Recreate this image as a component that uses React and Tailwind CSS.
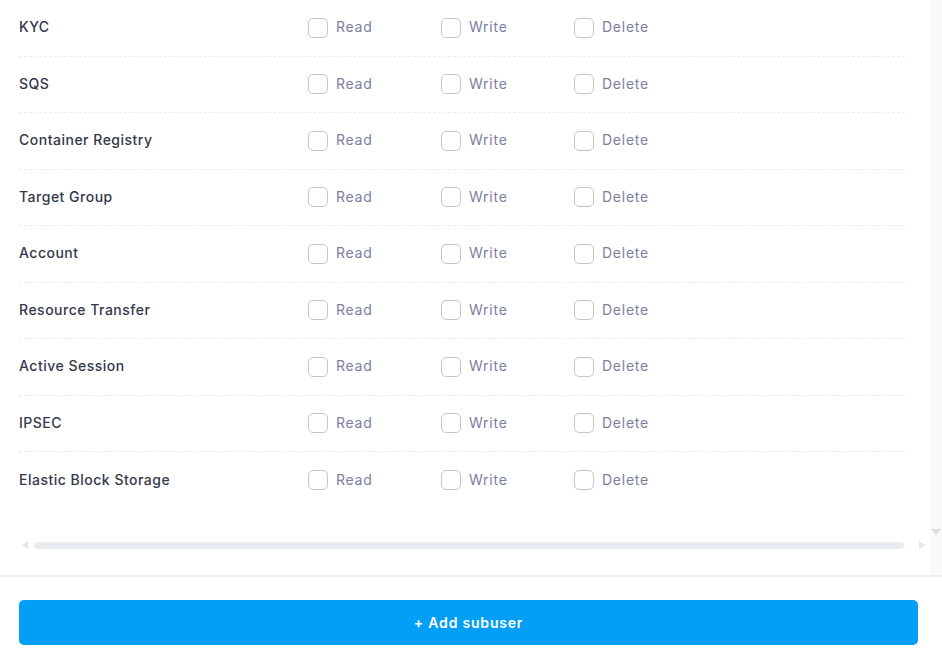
import React from "react";

const rows = [
  "KYC",
  "SQS",
  "Container Registry",
  "Target Group",
  "Account",
  "Resource Transfer",
  "Active Session",
  "IPSEC",
  "Elastic Block Storage",
];

function Perm({ label }) {
  return (
    <div className="w-[133px] flex items-center gap-[8px]">
      <span className="w-[20px] h-[20px] rounded-[5px] border border-[#c6c6c6] bg-white shrink-0" />
      <span className="text-[14px] text-[#7b80a0] tracking-[0.75px] -translate-y-[1px]">{label}</span>
    </div>
  );
}

export default function App() {
  return (
    <div
      className="w-[942px] h-[654px] bg-white flex flex-col overflow-hidden"
      style={{ fontFamily: "Inter, 'Noto Sans', sans-serif" }}
    >
      <div className="h-[575px] flex">
        <div className="flex-1 flex flex-col">
          <div className="pl-[19px] pr-[25px] flex flex-col">
            {rows.map((r, i) => (
              <div
                key={r}
                className={
                  "h-[56.5px] flex items-center " +
                  (i < rows.length - 1 ? "border-b border-dashed border-[#ebebeb]" : "")
                }
              >
                <div className="w-[289px] text-[14px] font-medium text-[#33384b] tracking-[0.5px] -translate-y-[1px]">{r}</div>
                <Perm label="Read" />
                <Perm label="Write" />
                <Perm label="Delete" />
              </div>
            ))}
          </div>
          <div className="mt-[32.5px] h-[8px] pl-[22px] flex items-center">
            <svg width="6" height="8" viewBox="0 0 6 8" className="shrink-0">
              <polygon points="6,0 6,8 0,4" fill="#e6e8ec" />
            </svg>
            <div className="ml-[6px] w-[870px] h-[7px] rounded-full bg-[#e8ebf0]" />
            <svg width="7" height="8" viewBox="0 0 7 8" className="ml-[15px] shrink-0">
              <polygon points="0,0 0,8 7,4" fill="#e6e8ec" />
            </svg>
          </div>
        </div>
        <div className="w-[12px] bg-[#f9f9f9] flex flex-col">
          <div className="h-[529px]" />
          <svg width="10" height="6" viewBox="0 0 10 6" className="ml-[1px]">
            <polygon points="0,0 10,0 5,6" fill="#dcdfe4" />
          </svg>
        </div>
      </div>
      <div className="h-[2px] bg-[#edf0f3]" />
      <div className="pl-[19px] pr-[24px] pt-[23px]">
        <button className="w-full h-[45px] rounded-[5px] bg-[#039ff6] text-white text-[14px] font-semibold tracking-[0.8px] flex items-center justify-center">
          + Add subuser
        </button>
      </div>
    </div>
  );
}
